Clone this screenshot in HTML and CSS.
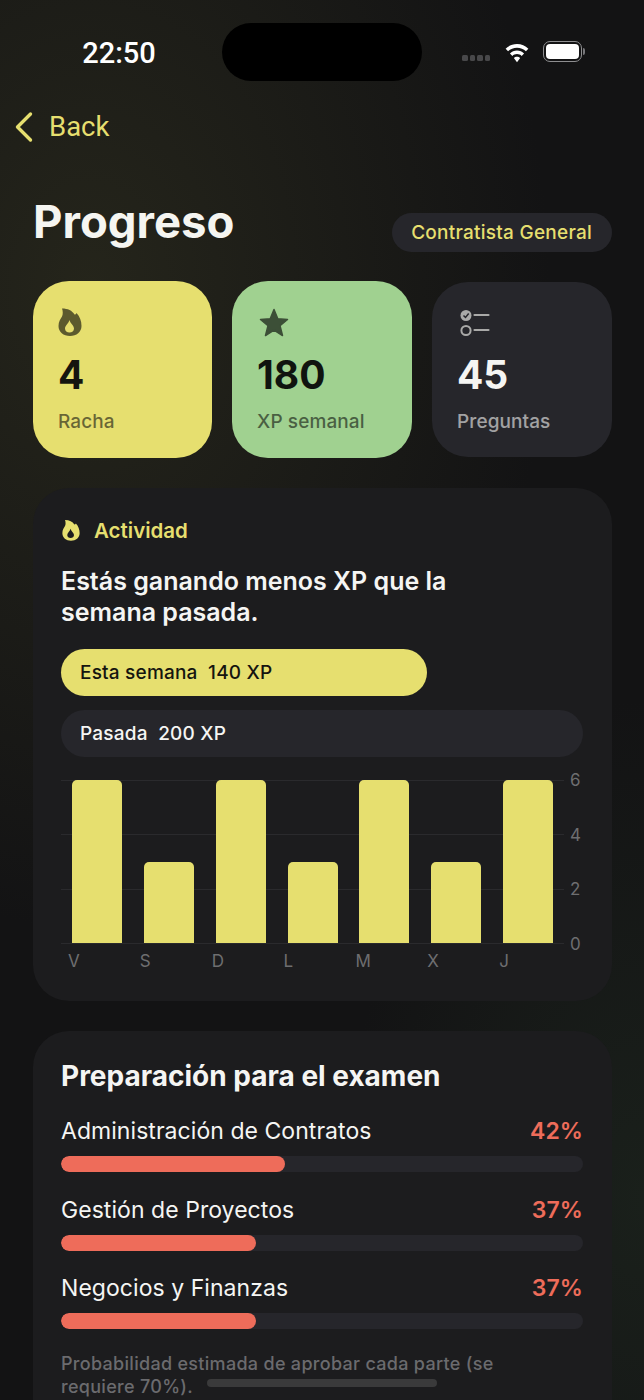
FILE: index.html
```html
<!DOCTYPE html>
<html lang="es">
<head>
    <meta charset="UTF-8">
    <meta name="viewport" content="width=device-width, initial-scale=1.0">
    <title>Progreso</title>
    <link rel="stylesheet" href="styles.css">
</head>
<body>
    <div class="screen">
        <div class="status-bar">
            <div class="time">22:50</div>
            <div class="island"></div>
            <div class="status-icons">
                <div class="signal"><span></span><span></span><span></span><span></span></div>
                <svg class="wifi" width="26" height="20" viewBox="0 0 24 19">
                    <path d="M12 1C7.800 1 4 2.700 1.200 5.400l2.300 2.400C5.700 5.700 8.700 4.400 12 4.400s6.300 1.300 8.500 3.400l2.300-2.400C20 2.700 16.200 1 12 1z" fill="#fff"/>
                    <path d="M12 7.200c-2.600 0-5 1-6.700 2.700l2.300 2.400c1.100-1.100 2.700-1.800 4.400-1.800s3.300.7 4.400 1.800l2.300-2.400C17 8.200 14.600 7.200 12 7.200z" fill="#fff"/>
                    <path d="M12 13c-1.200 0-2.200.5-3 1.200l3 4 3-4c-.8-.7-1.800-1.200-3-1.200z" fill="#fff"/>
                </svg>
                <div class="battery"><div class="battery-fill"></div></div>
                <div class="battery-cap"></div>
            </div>
        </div>

        <div class="back-row">
            <svg width="20" height="32" viewBox="0 0 20 32">
                <path d="M16.500 3 L3.500 16 L16.500 29" fill="none" stroke="#e6df6f" stroke-width="3.400" stroke-linecap="round" stroke-linejoin="round"/>
            </svg>
            <span>Back</span>
        </div>

        <div class="content">
            <div class="title-row">
                <h1>Progreso</h1>
                <div class="exam-pill">Contratista General</div>
            </div>

            <div class="stat-cards">
                <div class="stat-card yellow">
                    <svg class="stat-icon" width="24" height="29" viewBox="0 0 24 29">
                        <path fill-rule="evenodd" d="M4 .5C10 .5 14 2.500 16.500 6.500C17.500 6.500 18 6 18.500 5C21.800 8.500 23.500 13 23.500 18C23.500 24 18.500 28 12 28C5.500 28 .5 24 .5 18C.5 13.500 2.500 11 4 8.500C5 6.500 5 3 4 .5ZM11.500 12C10.500 15.500 7 17.500 7 20.500C7 23 9 24.500 11.500 24.500C14 24.500 16 23 16 20.500C16 17.500 12 15 11.500 12Z" fill="#5c5a2e"/>
                    </svg>
                    <div class="stat-value">4</div>
                    <div class="stat-label">Racha</div>
                </div>
                <div class="stat-card green">
                    <svg class="stat-icon star-icon" width="30" height="29" viewBox="0 0 30 29">
                        <path d="M15 1.500 L18.800 10.800 L28.500 11.500 L21 17.800 L23.500 27.500 L15 22.200 L6.500 27.500 L9 17.800 L1.500 11.500 L11.200 10.800 Z" fill="#3c4f37" stroke="#3c4f37" stroke-width="1.500" stroke-linejoin="round"/>
                    </svg>
                    <div class="stat-value">180</div>
                    <div class="stat-label">XP semanal</div>
                </div>
                <div class="stat-card dark">
                    <svg class="stat-icon" width="33" height="29" viewBox="0 0 33 29">
                        <circle cx="9" cy="6.500" r="5.500" fill="#a9a9a8"/>
                        <path d="M6.500 6.500 L8.500 8.500 L11.700 4.500" fill="none" stroke="#26262b" stroke-width="1.500"/>
                        <circle cx="9" cy="21.500" r="4.600" fill="none" stroke="#a9a9a8" stroke-width="2"/>
                        <path d="M17.500 6 H31.500 M17.500 21 H31.500" stroke="#a9a9a8" stroke-width="2.200" stroke-linecap="round"/>
                    </svg>
                    <div class="stat-value">45</div>
                    <div class="stat-label">Preguntas</div>
                </div>
            </div>

            <div class="panel activity">
                <div class="activity-head">
                    <svg width="18" height="23" viewBox="0 0 24 29">
                        <path fill-rule="evenodd" d="M4 .5C10 .5 14 2.500 16.500 6.500C17.500 6.500 18 6 18.500 5C21.800 8.500 23.500 13 23.500 18C23.500 24 18.500 28 12 28C5.500 28 .5 24 .5 18C.5 13.500 2.500 11 4 8.500C5 6.500 5 3 4 .5ZM11.500 12C10.500 15.500 7 17.500 7 20.500C7 23 9 24.500 11.500 24.500C14 24.500 16 23 16 20.500C16 17.500 12 15 11.500 12Z" fill="#e6df6f"/>
                    </svg>
                    <span>Actividad</span>
                </div>
                <div class="activity-text">Estás ganando menos XP que la semana pasada.</div>

                <div class="week-bar current">Esta semana&nbsp; 140 XP</div>
                <div class="week-bar past">Pasada&nbsp; 200 XP</div>

                <div class="chart">
                    <div class="plot">
                        <div class="grid-lines"><i></i><i></i><i></i><i></i></div>
                        <div class="bars">
                            <div class="slot"><div class="bar" style="height: 100%"></div></div>
                            <div class="slot"><div class="bar" style="height: 50%"></div></div>
                            <div class="slot"><div class="bar" style="height: 100%"></div></div>
                            <div class="slot"><div class="bar" style="height: 50%"></div></div>
                            <div class="slot"><div class="bar" style="height: 100%"></div></div>
                            <div class="slot"><div class="bar" style="height: 50%"></div></div>
                            <div class="slot"><div class="bar" style="height: 100%"></div></div>
                        </div>
                    </div>
                    <div class="y-axis"><span>6</span><span>4</span><span>2</span><span>0</span></div>
                </div>
                <div class="x-axis">
                    <span>V</span><span>S</span><span>D</span><span>L</span><span>M</span><span>X</span><span>J</span>
                </div>
            </div>

            <div class="panel readiness">
                <h2>Preparación para el examen</h2>

                <div class="topic">
                    <div class="topic-row"><span>Administración de Contratos</span><b>42%</b></div>
                    <div class="track"><div class="fill" style="width: 43%"></div></div>
                </div>
                <div class="topic">
                    <div class="topic-row"><span>Gestión de Proyectos</span><b>37%</b></div>
                    <div class="track"><div class="fill" style="width: 37.300%"></div></div>
                </div>
                <div class="topic">
                    <div class="topic-row"><span>Negocios y Finanzas</span><b>37%</b></div>
                    <div class="track"><div class="fill" style="width: 37.300%"></div></div>
                </div>

                <p class="note">Probabilidad estimada de aprobar cada parte (se requiere 70%).</p>
            </div>
        </div>

        <div class="home-indicator"></div>
    </div>
</body>
</html>
```

FILE: styles.css
```css
* {
    box-sizing: border-box;
}
html, body {
    margin: 0;
    padding: 0;
    height: 1400px;
    overflow: hidden;
    background: #131314;
}
body {
    font-family: 'Inter', 'Noto Sans', sans-serif;
    color: #f5f5f3;
}
.screen {
    position: relative;
    width: 644px;
    height: 1400px;
    overflow: hidden;
    background:
        radial-gradient(ellipse 460px 640px at 90px 290px, #25251b 0%, rgba(37, 37, 27, 0) 100%),
        radial-gradient(ellipse 300px 500px at 644px 1200px, #1a201b 0%, rgba(26, 32, 27, 0) 100%),
        #131314;
}

/* status bar */
.status-bar {
    display: flex;
    align-items: center;
    height: 58px;
    margin-top: 23px;
    position: absolute;
    top: 0;
    left: 0;
    width: 644px;
}
.time {
    width: 222px;
    padding-left: 16px;
    padding-top: 2px;
    text-align: center;
    font-family: 'Roboto', sans-serif;
    font-size: 29px;
    font-weight: 500;
    color: #fff;
}
.island {
    width: 200px;
    height: 58px;
    border-radius: 29px;
    background: #000;
}
.status-icons {
    display: flex;
    align-items: center;
    margin-left: 40px;
}
.signal {
    display: flex;
    gap: 2px;
    margin-top: 12px;
    margin-right: 14px;
}
.signal span {
    width: 5.500px;
    height: 6px;
    border-radius: 1.500px;
    background: #48484a;
}
.wifi {
    margin-right: 13px;
    margin-top: 1px;
}
.battery {
    width: 39px;
    height: 21px;
    border: 1.500px solid #8e8e90;
    border-radius: 7px;
    padding: 2px;
    margin-top: -2px;
}
.battery-fill {
    width: 100%;
    height: 100%;
    border-radius: 4px;
    background: #fff;
}
.battery-cap {
    width: 2px;
    height: 7px;
    margin-left: 1px;
    margin-top: -2px;
    border-radius: 0 2px 2px 0;
    background: #77777a;
}

/* back */
.back-row {
    display: flex;
    align-items: center;
    gap: 14px;
    position: absolute;
    top: 110px;
    left: 14px;
    font-family: 'Roboto', sans-serif;
    font-size: 27.500px;
    color: #e6df6f;
}
.back-row span {
    margin-left: 1px;
}

.content {
    padding: 194px 32px 0 33px;
}
.title-row {
    display: flex;
    justify-content: space-between;
    align-items: center;
    height: 56px;
    margin-bottom: 31px;
}
h1 {
    margin: 0;
    font-size: 45.500px;
    line-height: 56px;
    font-weight: 700;
    color: #f5f5f1;
}
.exam-pill {
    height: 39px;
    line-height: 39px;
    margin-top: 21px;
    padding: 0 20px 0 19px;
    border-radius: 20px;
    background: #26262b;
    color: #e6df6f;
    font-size: 19px;
    font-weight: 500;
    letter-spacing: 0.25px;
}

/* stat cards */
.stat-cards {
    display: grid;
    grid-template-columns: 179px 180px 180px;
    gap: 20px;
}
.stat-card {
    height: 177px;
    border-radius: 36px;
    padding: 27px 25px 0;
}
.stat-card.yellow {
    background: #e6df6f;
    color: #15150f;
}
.stat-card.green {
    background: #a0d190;
    color: #10140f;
}
.stat-card.dark {
    background: #26262b;
    color: #f5f5f3;
    height: 175px;
    margin-top: 1px;
}
.stat-icon {
    display: block;
    height: 29px;
}
.star-icon {
    margin-left: 2px;
}
.stat-value {
    margin-top: 15px;
    font-size: 39px;
    line-height: 46px;
    font-weight: 700;
}
.stat-label {
    margin-top: 12px;
    font-size: 19px;
    line-height: 24px;
    font-weight: 500;
    letter-spacing: 0.1px;
    opacity: 0.6;
}
.stat-card.dark .stat-value {
    margin-top: 14px;
}

/* panels */
.panel {
    border-radius: 36px;
    background: #1c1c1e;
    padding: 0 29px 0 28px;
}
.activity {
    height: 513px;
    margin-top: 30px;
    padding-top: 28px;
}
.activity-head {
    display: flex;
    align-items: center;
    gap: 14px;
    height: 28px;
    color: #e6df6f;
    font-size: 20.500px;
    font-weight: 600;
    margin-left: 1px;
}
.activity-text {
    width: 440px;
    margin-top: 22px;
    font-size: 25px;
    line-height: 31px;
    font-weight: 600;
}
.week-bar {
    height: 47px;
    line-height: 48px;
    border-radius: 24px;
    padding-left: 19px;
    font-size: 19px;
    font-weight: 500;
    letter-spacing: 0.2px;
}
.week-bar.current {
    width: 366px;
    margin-top: 21px;
    background: #e6df6f;
    color: #15150f;
}
.week-bar.past {
    margin-top: 14px;
    background: #26262b;
    color: #f5f5f3;
}

/* chart */
.chart {
    display: flex;
    margin-top: 23px;
}
.plot {
    position: relative;
    width: 503px;
    height: 164px;
}
.grid-lines {
    position: absolute;
    top: 0;
    left: 0;
    right: 0;
    bottom: 0;
    display: flex;
    flex-direction: column;
    justify-content: space-between;
}
.grid-lines i {
    display: block;
    height: 1px;
    background: #2a2a2d;
}
.bars {
    position: relative;
    display: flex;
    height: 163px;
}
.slot {
    flex: 1;
    display: flex;
    align-items: flex-end;
    padding-left: 11px;
}
.bar {
    width: 50px;
    border-radius: 5px 5px 0 0;
    background: #e6df6f;
}
.y-axis {
    display: flex;
    flex-direction: column;
    justify-content: space-between;
    height: 184px;
    margin: -10px 0 -10px 6px;
    font-size: 17px;
    line-height: 20px;
    color: #6e6e70;
}
.x-axis {
    display: flex;
    width: 503px;
    margin-top: 6px;
    font-size: 17px;
    line-height: 22px;
    color: #6e6e70;
}
.x-axis span {
    flex: 1;
    padding-left: 7px;
}

/* exam readiness */
.readiness {
    height: 500px;
    margin-top: 30px;
    padding-top: 27px;
}
h2 {
    margin: 0;
    font-size: 28px;
    line-height: 36px;
    font-weight: 700;
}
.topic {
    margin-top: 22px;
}
.topic + .topic {
    margin-top: 22.500px;
}
.topic-row {
    display: flex;
    justify-content: space-between;
    align-items: center;
    height: 30px;
    font-size: 23px;
    font-weight: 400;
    letter-spacing: 0.05px;
}
.topic-row b {
    font-weight: 600;
    color: #ee6c5a;
}
.track {
    height: 16px;
    margin-top: 10px;
    border-radius: 8px;
    background: #26262b;
    overflow: hidden;
}
.fill {
    height: 100%;
    border-radius: 8px;
    background: #ee6c5a;
}
.note {
    max-width: 480px;
    margin: 23px 0 0;
    font-size: 18px;
    line-height: 23px;
    font-weight: 500;
    color: #6b6b6e;
    letter-spacing: 0.3px;
}

.home-indicator {
    position: absolute;
    left: 207px;
    top: 1379px;
    width: 230px;
    height: 8px;
    border-radius: 4px;
    background: #3a3a3b;
}
```
